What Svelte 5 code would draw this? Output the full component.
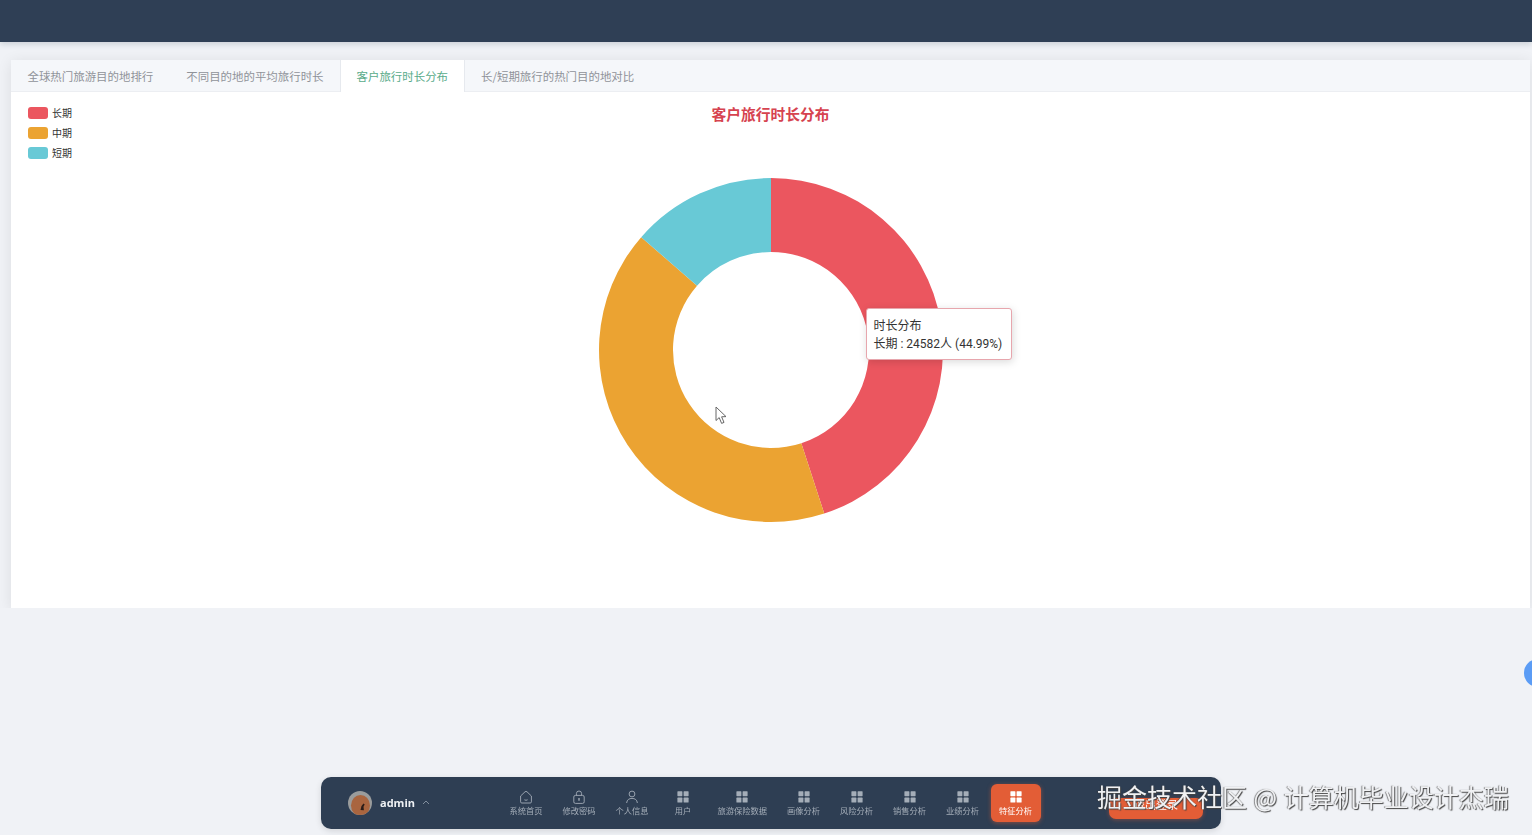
<script>
  const tabs = ['全球热门旅游目的地排行', '不同目的地的平均旅行时长', '客户旅行时长分布', '长/短期旅行的热门目的地对比'];
  const activeTab = 2;

  const slices = [
    { name: '长期', pct: 44.99, color: '#eb565f' },
    { name: '中期', pct: 41.4, color: '#eba332' },
    { name: '短期', pct: 13.61, color: '#68c9d6' }
  ];

  const cx = 172;
  const cy = 172;
  const outer = 172;
  const inner = 98;

  function point(r, deg) {
    const a = (deg * Math.PI) / 180;
    return `${(cx + r * Math.sin(a)).toFixed(2)} ${(cy - r * Math.cos(a)).toFixed(2)}`;
  }

  function arc(from, to) {
    const large = to - from > 180 ? 1 : 0;
    return `M${point(outer, from)} A${outer} ${outer} 0 ${large} 1 ${point(outer, to)} L${point(inner, to)} A${inner} ${inner} 0 ${large} 0 ${point(inner, from)} Z`;
  }

  let acc = 0;
  const arcs = slices.map((s) => {
    const from = acc;
    acc += (s.pct / 100) * 360;
    return { ...s, d: arc(from, acc) };
  });

  const nav = [
    { label: '系统首页', icon: 'home' },
    { label: '修改密码', icon: 'lock' },
    { label: '个人信息', icon: 'user' },
    { label: '用户', icon: 'grid' },
    { label: '旅游保险数据', icon: 'grid' },
    { label: '画像分析', icon: 'grid' },
    { label: '风险分析', icon: 'grid' },
    { label: '销售分析', icon: 'grid' },
    { label: '业绩分析', icon: 'grid' },
    { label: '特征分析', icon: 'grid', active: true }
  ];
</script>

<header class="topbar"></header>

<main class="content">
  <section class="card">
    <div class="tabs">
      {#each tabs as tab, i}
        <div class="tab" class:active={i === activeTab}>{tab}</div>
      {/each}
    </div>
    <div class="chart">
      <ul class="legend">
        {#each slices as s}
          <li><span class="swatch" style="background: {s.color}"></span>{s.name}</li>
        {/each}
      </ul>
      <h2 class="title">客户旅行时长分布</h2>
      <div class="donut">
        <svg width="344" height="344" viewBox="0 0 344 344">
          {#each arcs as a}
            <path d={a.d} fill={a.color} />
          {/each}
        </svg>
        <div class="tooltip">
          <div>时长分布</div>
          <div>长期 : 24582人 (44.99%)</div>
        </div>
        <svg class="cursor" width="13" height="19" viewBox="0 0 13 19">
          <path d="M1 1 L1 14.5 L4.2 11.6 L6.6 17.4 L9 16.4 L6.6 10.8 L11 10.6 Z" fill="#fff" stroke="#666" stroke-width="1" stroke-linejoin="round" />
        </svg>
      </div>
    </div>
  </section>
</main>

<div class="side-dot"></div>

<nav class="dock">
  <div class="user">
    <svg class="avatar" width="24" height="24" viewBox="0 0 24 24">
      <defs>
        <clipPath id="avatar-clip"><circle cx="12" cy="12" r="12" /></clipPath>
      </defs>
      <g clip-path="url(#avatar-clip)">
        <rect width="24" height="24" fill="#9a9c9c" />
        <ellipse cx="12.5" cy="14.5" rx="9.5" ry="10.5" fill="#a9653f" />
        <path d="M12.5 19 l1 -4 l2 -2.4 l1.2 0.8 l-1.2 2.4 l0.4 3.4 z" fill="#2a1c18" />
      </g>
    </svg>
    <span class="name">admin</span>
    <svg class="chevron" width="8" height="5" viewBox="0 0 8 5">
      <path d="M1 4 L4 1 L7 4" fill="none" stroke="#8b97a6" stroke-width="0.9" />
    </svg>
  </div>

  <div class="nav-items">
    {#each nav as item}
      <div class="nav-item" class:active={item.active}>
        <svg class="icon" width="14" height="14" viewBox="0 0 14 14">
          {#if item.icon === 'home'}
            <path d="M1.6 6 L6 1.8 Q7 1 8 1.8 L12.4 6 V11.8 Q12.4 13 11.2 13 H2.8 Q1.6 13 1.6 11.8 Z" fill="none" stroke="currentColor" stroke-width="0.9" stroke-linejoin="round" />
            <path d="M5.4 9.8 Q7 10.8 8.6 9.8" fill="none" stroke="currentColor" stroke-width="0.9" />
          {:else if item.icon === 'lock'}
            <rect x="1.8" y="5.4" width="10.4" height="8" rx="1.6" fill="none" stroke="currentColor" stroke-width="0.9" />
            <path d="M4.4 5.4 V3.6 a2.6 2.6 0 0 1 5.2 0 V5.4" fill="none" stroke="currentColor" stroke-width="0.9" />
            <rect x="6.3" y="8" width="1.4" height="2.8" rx="0.6" fill="currentColor" />
          {:else if item.icon === 'user'}
            <circle cx="7" cy="4" r="2.9" fill="none" stroke="currentColor" stroke-width="0.9" />
            <path d="M1.6 13 C2 9.6 4.2 8.4 7 8.4 C9.8 8.4 12 9.6 12.4 13" fill="none" stroke="currentColor" stroke-width="0.9" />
          {:else}
            <rect x="1.4" y="1.2" width="5" height="5" rx="0.6" fill="currentColor" />
            <rect x="7.6" y="1.2" width="5" height="5" rx="0.6" fill="currentColor" />
            <rect x="1.4" y="7.6" width="5" height="5" rx="0.6" fill="currentColor" />
            <rect x="7.6" y="7.6" width="5" height="5" rx="0.6" fill="currentColor" />
          {/if}
        </svg>
        <span>{item.label}</span>
      </div>
    {/each}
  </div>

  <div class="dock-btn">退出登录</div>
</nav>

<div class="watermark">掘金技术社区 @ 计算机毕业设计杰瑞</div>

<style>
  :global(body) {
    margin: 0;
    background: #f0f2f6;
    font-family: "Liberation Sans", "Noto Sans CJK SC", sans-serif;
    overflow: hidden;
  }

  .topbar {
    height: 42px;
    background: #2f3f55;
    box-shadow: 0 2px 6px rgba(47, 63, 85, 0.2);
  }

  .content {
    padding: 18px 2px 0 11px;
  }

  .card {
    height: 548px;
    background: #fff;
    box-shadow: 0 2px 14px rgba(0, 0, 0, 0.09);
  }

  .tabs {
    display: flex;
    height: 32px;
    background: #f5f7fa;
    border-bottom: 1px solid #eceef2;
    box-sizing: border-box;
  }

  .tab {
    padding: 0 15.5px;
    font-size: 11.45px;
    line-height: 33px;
    color: #909399;
    white-space: nowrap;
    height: 32px;
    box-sizing: border-box;
    border-left: 1px solid transparent;
    border-right: 1px solid transparent;
    font-family: "Noto Sans CJK SC", sans-serif;
  }

  .tab.active {
    color: #5aab8a;
    background: #fff;
    border-left-color: #e6e9ee;
    border-right-color: #e6e9ee;
  }

  .chart {
    position: relative;
    height: 516px;
  }

  .legend {
    position: absolute;
    left: 17px;
    top: 10.5px;
    margin: 0;
    padding: 0;
    list-style: none;
    font-size: 10px;
    color: #333;
  }

  .legend li {
    display: flex;
    align-items: center;
    height: 20px;
    gap: 4px;
  }

  .swatch {
    width: 20px;
    height: 12px;
    border-radius: 3px;
  }

  .title {
    margin: 0;
    padding-top: 14px;
    text-align: center;
    font-size: 14.75px;
    line-height: 18px;
    font-weight: 700;
    color: #d6434f;
  }

  .donut {
    position: relative;
    width: 344px;
    height: 344px;
    margin: 54px auto 0;
  }

  .donut svg {
    display: block;
  }

  .tooltip {
    position: absolute;
    left: 267px;
    top: 130px;
    width: 146px;
    height: 52px;
    box-sizing: border-box;
    padding: 8px 7px;
    background: #fff;
    border: 1px solid #e7a6ad;
    border-radius: 3px;
    box-shadow: 1px 2px 8px rgba(0, 0, 0, 0.15);
    font-family: Roboto, "Noto Sans CJK SC", sans-serif;
    font-size: 12px;
    line-height: 18px;
    color: #333;
    white-space: nowrap;
  }

  .donut .cursor {
    position: absolute;
    left: 116px;
    top: 228px;
  }

  .side-dot {
    position: fixed;
    left: 1524px;
    top: 659px;
    width: 28px;
    height: 28px;
    border-radius: 50%;
    background: #5b9cf5;
  }

  .dock {
    position: fixed;
    left: 321px;
    top: 777px;
    width: 900px;
    height: 52px;
    display: flex;
    align-items: center;
    background: #2e3e53;
    border-radius: 10px;
    box-shadow: 0 2px 6px rgba(0, 0, 0, 0.12);
  }

  .user {
    display: flex;
    align-items: center;
    width: 178.5px;
    padding-left: 27px;
    box-sizing: border-box;
    flex: none;
  }

  .avatar {
    display: block;
    flex: none;
  }

  .name {
    margin-left: 8px;
    margin-top: -2px;
    font-size: 11px;
    font-weight: 700;
    color: #eef1f4;
    font-family: "Open Sans", sans-serif;
  }

  .chevron {
    margin-left: 7px;
    margin-top: -2px;
  }

  .nav-items {
    display: flex;
    align-items: center;
    flex: none;
  }

  .nav-item {
    display: flex;
    flex-direction: column;
    align-items: center;
    justify-content: center;
    gap: 2px;
    height: 38px;
    padding: 0 8.5px;
    margin: 0 1.5px;
    border-radius: 6px;
    color: #a4adb8;
    font-size: 8.25px;
    line-height: 11px;
    white-space: nowrap;
  }

  .nav-item:nth-child(4) {
    min-width: 29px;
  }

  .nav-item.active {
    background: #e35d36;
    color: #fff;
    box-shadow: 0 1px 4px rgba(227, 93, 54, 0.5);
  }

  .dock-btn {
    flex: none;
    width: 94px;
    height: 21px;
    margin-left: 67px;
    margin-top: 11px;
    border-radius: 7px;
    background: #e35d36;
    box-shadow: 0 1px 4px rgba(227, 93, 54, 0.4);
    color: #fff;
    font-size: 11px;
    line-height: 15px;
    text-align: center;
  }

  .watermark {
    position: fixed;
    left: 1097px;
    top: 781px;
    font-size: 25px;
    line-height: 30px;
    word-spacing: 1px;
    color: #f0f1f3;
    font-family: "Noto Sans CJK SC", sans-serif;
    text-shadow: 1px 1px 1px #444, -1px 0 1px rgba(60, 60, 60, 0.6);
    white-space: nowrap;
  }
</style>
